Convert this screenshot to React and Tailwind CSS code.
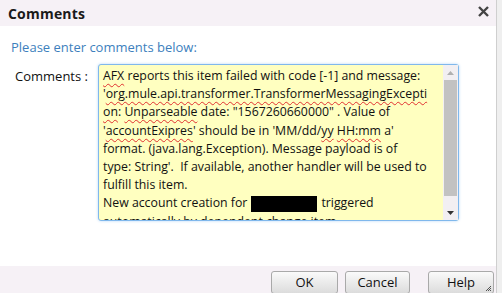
const font = { fontFamily: '"Open Sans", "Noto Sans", sans-serif' }

function Sq({ children }) {
  return (
    <span className="underline decoration-wavy decoration-[#e03030] decoration-1 underline-offset-[3px]">
      {children}
    </span>
  )
}

function Btn({ children, grip }) {
  return (
    <button
      type="button"
      className="relative h-[23px] w-full rounded-[3px] border border-[#a9a9a9] bg-gradient-to-b from-[#fafafa] to-[#dcdcdc] text-[13px] text-[#111]"
    >
      {children}
      {grip && (
        <svg className="absolute bottom-[1px] right-[1px]" width="7" height="7" viewBox="0 0 7 7">
          <path d="M6 1L1 6M6 3L3 6M6 5L5 6" stroke="#555" strokeWidth="1" />
        </svg>
      )}
    </button>
  )
}

export default function App() {
  return (
    <div className="flex h-[293px] w-[502px] bg-[#efefef] text-[#111]" style={font}>
      <div className="flex w-[497px] flex-col border-r border-[#cfcfcf] bg-white">
        <div className="flex h-[26px] items-center justify-between bg-[#f6f1f6] pl-[8px] pr-[7px]">
          <span className="text-[14px] font-bold tracking-[0.2px] text-[#1a1a1a]">Comments</span>
          <svg width="11" height="11" viewBox="0 0 11 11" className="mb-[3px]">
            <path d="M1 1L10 10M10 1L1 10" stroke="#444" strokeWidth="2.4" />
          </svg>
        </div>

        <div className="flex-1">
          <p className="ml-[11px] mt-[13px] text-[13px] leading-[16px] text-[#3d7fbd]">
            Please enter comments below:
          </p>
          <div className="mt-[9px] flex">
            <div className="w-[89px] pr-[1px] pt-[4px] text-right text-[13px] leading-[16px]">
              Comments :
            </div>
            <div className="ml-[9px] flex h-[157px] w-[361px] rounded-[3px] border border-[#80b8ec] bg-[#ffffc0] shadow-[0_0_3px_#b8d8f8]">
              <div className="flex-1 overflow-hidden pl-[4px] pt-[2px] text-[12.3px] leading-[18.2px] whitespace-nowrap text-[#111]">
                <div><Sq>AFX</Sq> reports this item failed with code [-1] and message:</div>
                <div>'<Sq>org.mule.api.transformer.TransformerMessagingExcepti</Sq></div>
                <div><Sq>on</Sq>: <Sq>Unparseable</Sq> date: "1567260660000" . Value of</div>
                <div>'<Sq>accountExipres</Sq>' should be in 'MM/dd/<Sq>yy</Sq> <Sq>HH:mm</Sq> a'</div>
                <div>format. (java.lang.Exception). Message payload is of</div>
                <div>type: String'.&nbsp; If available, another handler will be used to</div>
                <div>fulfill this item.</div>
                <div className="flex items-center">
                  New account creation for
                  <span className="mx-[4px] inline-block h-[16px] w-[66px] bg-black" />
                  triggered
                </div>
                <div className="h-[9px] overflow-hidden">automatically by dependent change item.</div>
              </div>
              <div className="flex w-[15px] flex-col items-center bg-[#f2eff2] py-[1px]">
                <svg width="9" height="14" viewBox="0 0 9 14">
                  <path d="M1 9L4.5 5L8 9Z" fill="#b0b0b0" />
                </svg>
                <div className="h-[116px] w-[13px] bg-[#c2c2c2]" />
                <div className="flex-1" />
                <svg width="9" height="12" viewBox="0 0 9 12">
                  <path d="M1 4L8 4L4.5 8Z" fill="#333" />
                </svg>
              </div>
            </div>
          </div>
        </div>

        <div className="flex h-[27px] items-start justify-end bg-[#f6f1f6] pr-[2px] pt-[3px]">
          <div className="w-[67px]"><Btn>OK</Btn></div>
          <div className="ml-[7px] w-[65px]"><Btn>Cancel</Btn></div>
          <div className="ml-[18px] w-[66px]"><Btn grip>Help</Btn></div>
        </div>
      </div>
    </div>
  )
}
